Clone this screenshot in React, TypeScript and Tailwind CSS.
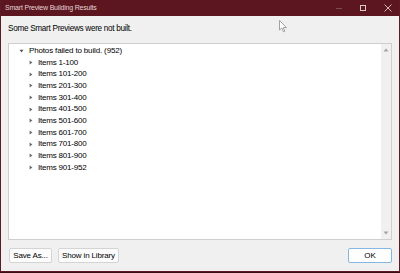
import React from 'react';

const items = [
  'Items 1-100',
  'Items 101-200',
  'Items 201-300',
  'Items 301-400',
  'Items 401-500',
  'Items 501-600',
  'Items 601-700',
  'Items 701-800',
  'Items 801-900',
  'Items 901-952',
];

function Btn({ label, primary, w }: { label: string; primary?: boolean; w: string }) {
  return (
    <div
      className={`${w} h-[15px] flex items-center justify-center rounded-[2px] border text-[8px] tracking-[-0.15px] text-black ${
        primary ? 'border-[#86b6e4] bg-white' : 'border-[#d4d4d4] bg-[#fcfcfc]'
      }`}
    >
      {label}
    </div>
  );
}

export default function App() {
  return (
    <div
      className="w-[400px] h-[273px] bg-[#3b0d13] relative"
      style={{ fontFamily: '"Liberation Sans", Arial, sans-serif' }}
    >
      <div className="w-[400px] h-[272px] flex flex-col border-x border-b border-[#5e1a24]">
        {/* title bar */}
        <div className="h-[16px] bg-[#5c1620] flex items-center justify-between pl-[4px] pr-[7px]">
          <span className="text-[7px] tracking-[-0.2px] text-[#e4d3d6]">Smart Preview Building Results</span>
          <div className="flex items-center gap-[18px]">
            <div className="w-[6px] h-px bg-[#7e4a53]" />
            <div className="w-[6px] h-[6px] border border-[#dcc8cb]" />
            <svg width="8" height="8" viewBox="0 0 8 8">
              <path d="M0.5 0.5 L7.5 7.5 M7.5 0.5 L0.5 7.5" stroke="#dcc8cb" strokeWidth="0.9" />
            </svg>
          </div>
        </div>

        {/* body */}
        <div className="flex-1 bg-[#f0f0f0] flex flex-col px-[7px]">
          <div className="h-[27px] flex items-center text-[8.2px] tracking-[-0.3px] text-black">
            Some Smart Previews were not built.
          </div>

          <div className="h-[197px] bg-white border border-[#cfcfcf] flex">
            <div className="flex-1 pt-[1px] text-[8px] text-black leading-[11.67px]">
              <div className="flex items-center pl-[10px]">
                <svg width="5" height="4" viewBox="0 0 5 4" className="mr-[5px]">
                  <path d="M0.5 0.8 L4.5 0.8 L2.5 3.4 Z" fill="#555" />
                </svg>
                <span className="tracking-[-0.15px]">Photos failed to build. (952)</span>
              </div>
              {items.map((it) => (
                <div key={it} className="flex items-center pl-[20px]">
                  <svg width="4" height="5" viewBox="0 0 4 5" className="mr-[5px]">
                    <path d="M0.6 0.5 L3.4 2.5 L0.6 4.5 Z" fill="#666" />
                  </svg>
                  <span className="tracking-[-0.2px]">{it}</span>
                </div>
              ))}
            </div>
            <div className="w-[10px] bg-[#f0f0f0] flex flex-col items-center justify-between py-[4px]">
              <svg width="6" height="4" viewBox="0 0 6 4">
                <path d="M0.5 3.5 L3 0.5 L5.5 3.5 Z" fill="#a3a3a3" />
              </svg>
              <svg width="6" height="4" viewBox="0 0 6 4">
                <path d="M0.5 0.5 L3 3.5 L5.5 0.5 Z" fill="#a3a3a3" />
              </svg>
            </div>
          </div>

          <div className="flex-1 flex items-center justify-between pl-[1px]">
            <div className="flex gap-[6px]">
              <Btn label="Save As..." w="w-[43px]" />
              <Btn label="Show in Library" w="w-[61px]" />
            </div>
            <Btn label="OK" primary w="w-[44px]" />
          </div>
        </div>
      </div>

      {/* mouse cursor */}
      <svg className="absolute left-[279px] top-[20px]" width="9" height="13" viewBox="0 0 9 13">
        <path d="M0.5 0.5 L0.5 10 L2.8 8 L4.4 11.8 L5.8 11.2 L4.3 7.6 L7.4 7.6 Z" fill="#fff" stroke="#8a8a8a" strokeWidth="0.8" />
      </svg>
    </div>
  );
}
